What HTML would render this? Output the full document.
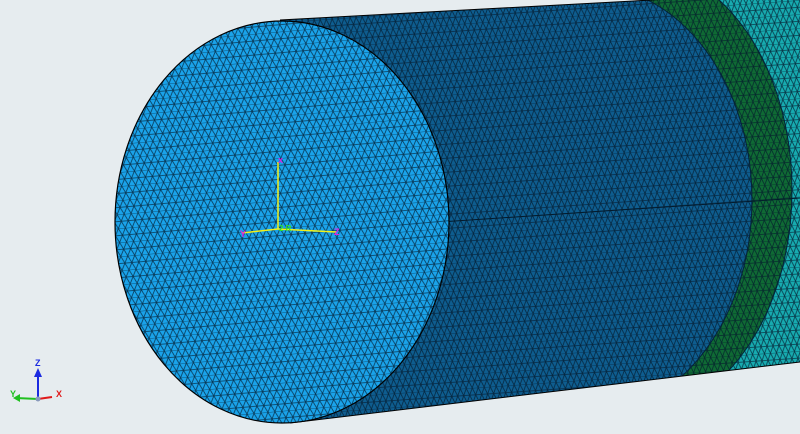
<!DOCTYPE html>
<html><head><meta charset="utf-8"><style>
html,body{margin:0;padding:0;background:#e6ecef;width:800px;height:434px;overflow:hidden}
</style></head><body>
<svg width="800" height="434" viewBox="0 0 800 434" xmlns="http://www.w3.org/2000/svg" font-family="Liberation Sans, sans-serif">
<defs>
<pattern id="m1" width="12" height="14" patternUnits="userSpaceOnUse" patternTransform="rotate(-4)">
<path d="M0 0H12M0 7H12M0 0L6 14M6 0L12 14M6 0L0 14M12 0L6 14" stroke="#04192c" stroke-width="0.8" fill="none" opacity="0.8"/>
</pattern>
<pattern id="m2" width="14" height="14" patternUnits="userSpaceOnUse" patternTransform="rotate(-5)">
<path d="M0 0H14M0 7H14M0 0L7 14M7 0L14 14M7 0L0 14M14 0L7 14" stroke="#052238" stroke-width="0.8" fill="none" opacity="0.85"/>
</pattern>
<clipPath id="body"><polygon points="280,20 800,-8 800,362 290,423"/></clipPath>
</defs>
<g clip-path="url(#body)">
<rect x="0" y="-10" width="800" height="450" fill="#17abb0"/>
<rect x="0" y="-10" width="635" height="450" fill="#0f6a34"/>
<ellipse cx="635" cy="190" rx="157" ry="225" fill="#0f6a34"/>
<rect x="0" y="-10" width="590" height="450" fill="#0e5d8f"/>
<ellipse cx="590" cy="200" rx="162" ry="214" fill="#0e5d8f"/>
<rect x="0" y="-10" width="800" height="450" fill="url(#m1)"/>
<path d="M590 -14 A162 214 0 0 1 590 414" fill="none" stroke="#04223a" stroke-width="1"/>
<path d="M635 -35 A157 225 0 0 1 635 415" fill="none" stroke="#04223a" stroke-width="1"/>
<line x1="440" y1="222" x2="800" y2="198" stroke="#031a2c" stroke-width="1"/>
</g>
<line x1="280" y1="20" x2="800" y2="-8" stroke="#000" stroke-width="1"/>
<line x1="290" y1="423" x2="800" y2="362" stroke="#000" stroke-width="1"/>
<ellipse cx="282" cy="222" rx="167" ry="201" fill="#1aa3ea"/>
<ellipse cx="282" cy="222" rx="167" ry="201" fill="url(#m2)"/>
<ellipse cx="282" cy="222" rx="167" ry="201" fill="none" stroke="#000" stroke-width="1.2"/>
<line x1="278" y1="229" x2="278" y2="162" stroke="#f2f21a" stroke-width="1.5"/>
<line x1="242" y1="233" x2="278" y2="229" stroke="#f2f21a" stroke-width="1.5"/>
<line x1="278" y1="229" x2="336" y2="232" stroke="#f2f21a" stroke-width="1.5"/>
<text x="278" y="163" fill="#e020e0" font-size="9" font-weight="bold">x</text>
<text x="240" y="237" fill="#e020e0" font-size="9" font-weight="bold">Y</text>
<text x="334" y="235" fill="#e020e0" font-size="9" font-weight="bold">Z</text>
<text x="279" y="231" fill="#30e030" font-size="8" font-weight="bold">2 R</text>
<line x1="38" y1="399" x2="38" y2="375" stroke="#1a2ae0" stroke-width="2"/>
<polygon points="34,377 42,377 38,368" fill="#1a2ae0"/>
<text x="35" y="366" fill="#1a2ae0" font-size="9" font-weight="bold">Z</text>
<line x1="38" y1="399" x2="16" y2="398" stroke="#20c020" stroke-width="2"/>
<polygon points="13,398 20,394 20,402" fill="#20c020"/>
<text x="10" y="397" fill="#20c020" font-size="9" font-weight="bold">Y</text>
<line x1="38" y1="399" x2="52" y2="397" stroke="#e01a1a" stroke-width="2"/>
<text x="56" y="397" fill="#e01a1a" font-size="9" font-weight="bold">X</text>
<circle cx="38" cy="399" r="2.5" fill="#8899bb"/>
</svg>
</body></html>
